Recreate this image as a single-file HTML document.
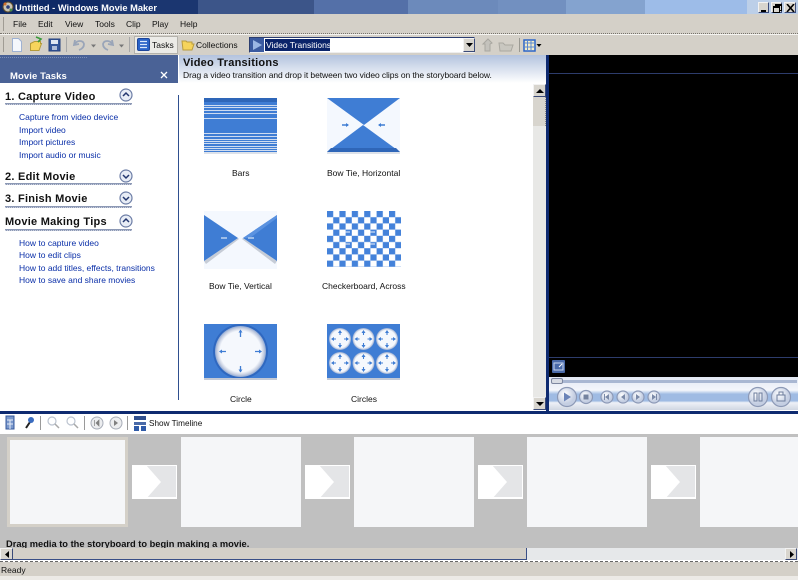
<!DOCTYPE html>
<html><head><meta charset="utf-8"><title>Untitled - Windows Movie Maker</title>
<style>
html,body{margin:0;padding:0;width:798px;height:580px;overflow:hidden;background:#fff}
body{position:relative;font-family:"Liberation Sans",sans-serif;font-size:8.5px;color:#111}
.a{position:absolute}
.t{position:absolute;white-space:nowrap;line-height:12px;height:12px}
.l{color:#0a2fa8}
.h{font-weight:bold;font-size:11px;letter-spacing:.25px;color:#111}
.u{position:absolute;left:5px;width:127px;height:1px;background:#8d99b5;border-bottom:1px dotted #c8cede}
.btn{position:absolute;background:#d8d5ce;border:1px solid;border-color:#f2f2f2 #3a4a78 #3a4a78 #f2f2f2;box-sizing:border-box}
</style></head><body>

<!-- title bar -->
<div class="a" style="left:0;top:0;width:798px;height:14px;background:linear-gradient(90deg,#0f2a66 0 100px,#1b3670 100px 198px,#3c5589 198px 314px,#5470a8 314px 408px,#6c8abb 408px 498px,#7290c0 498px 566px,#84a3cf 566px 645px,#9dbce8 645px 747px,#bccfe8 747px)"></div>
<div class="t" style="left:15px;top:2px;color:#fff;font-weight:bold;font-size:9.3px">Untitled - Windows Movie Maker</div>
<svg class="a" style="left:1px;top:0" width="14" height="14"><circle cx="7" cy="7" r="5" fill="#c8c4b4" stroke="#5b4a2a"/><circle cx="7" cy="7" r="1.8" fill="#2b3f7a"/><circle cx="4" cy="4" r="1.5" fill="#d0702a"/><circle cx="10" cy="10" r="1.5" fill="#4a8a4a"/></svg>
<div class="btn" style="left:758px;top:2px;width:11px;height:11px"><div class="a" style="left:2px;top:7px;width:5px;height:2px;background:#000"></div></div>
<div class="btn" style="left:771px;top:2px;width:11px;height:11px"><div class="a" style="left:3px;top:1px;width:5px;height:4px;border:1px solid #000;border-top-width:2px"></div><div class="a" style="left:1px;top:3px;width:5px;height:4px;border:1px solid #000;border-top-width:2px;background:#d8d5ce"></div></div>
<div class="btn" style="left:784px;top:2px;width:12px;height:11px"><svg class="a" style="left:1px;top:1px" width="9" height="8"><path d="M1 0L8 8M8 0L1 8" stroke="#000" stroke-width="1.6"/></svg></div>

<!-- menu -->
<div class="a" style="left:0;top:14px;width:798px;height:20px;background:#d4d0c8;border-bottom:1px dotted #77736c;box-sizing:border-box"></div>
<div class="a" style="left:3px;top:17px;width:1px;height:14px;background:#a09c94"></div>
<div class="t" style="left:13px;top:18px">File</div>
<div class="t" style="left:38px;top:18px">Edit</div>
<div class="t" style="left:65px;top:18px">View</div>
<div class="t" style="left:95px;top:18px">Tools</div>
<div class="t" style="left:126px;top:18px">Clip</div>
<div class="t" style="left:152px;top:18px">Play</div>
<div class="t" style="left:180px;top:18px">Help</div>

<!-- toolbar -->
<div class="a" style="left:0;top:34px;width:798px;height:21px;background:#d4d0c8;border-top:1px solid #f4f3f0;box-sizing:border-box"></div>
<div class="a" style="left:3px;top:37px;width:1px;height:15px;background:#a09c94"></div>
<svg class="a" style="left:0;top:34px" width="135" height="21">
<path d="M12.5 4.5h6l3 3v10h-9z" fill="#f4f7fc" stroke="#9fb2d2"/>
<path d="M30.5 9.500l4-2h6v2h1l-2.500 7h-8.500z" fill="#f6d45c" stroke="#b49a3a"/><path d="M36 3l5 2-3 3" fill="none" stroke="#3a9a3a" stroke-width="1.600"/>
<rect x="49" y="5" width="11" height="12" fill="#34569a" stroke="#25407c"/><rect x="51" y="6" width="7" height="4" fill="#dfe6f2"/><rect x="52" y="12" width="5" height="4" fill="#aebcd8"/>
<rect x="66" y="3" width="1" height="15" fill="#a8a8a8"/>
<path d="M75 6l-1 5 5-1M75 10c2-4 8-4 9 0 0 3-2 5-5 6" fill="none" stroke="#9aa5b8" stroke-width="1.800"/>
<path d="M91 10.500h5l-2.500 3z" fill="#777"/>
<path d="M112 6l1 5-5-1M112 10c-2-4-8-4-9 0 0 3 2 5 5 6" fill="none" stroke="#9aa5b8" stroke-width="1.800"/>
<path d="M119 10.500h5l-2.500 3z" fill="#777"/>
<rect x="129" y="3" width="1" height="15" fill="#a8a8a8"/>
</svg>
<div class="a" style="left:134px;top:36px;width:44px;height:18px;background:#ecebe7;border:1px solid #b4b2ac;box-sizing:border-box"></div>
<svg class="a" style="left:137px;top:38px" width="14" height="14"><rect x=".5" y=".5" width="12" height="12" rx="1.500" fill="#2b64c8" stroke="#1d459a"/><path d="M3 3.500h7M3 6.500h7M3 9.500h7" stroke="#dbe8fb" stroke-width="1.200"/></svg>
<div class="t" style="left:152px;top:39px">Tasks</div>
<svg class="a" style="left:181px;top:38px" width="14" height="14"><path d="M1 3h4l1 1h5v2h2l-2 6H2z" fill="#f6d45c" stroke="#b99c3e"/></svg>
<div class="t" style="left:196px;top:39px">Collections</div>

<!-- combo -->
<div class="a" style="left:249px;top:37px;width:226px;height:16px;background:#fff;border:1px solid;border-color:#2c3e70 #d8d8d8 #eee #2c3e70;box-sizing:border-box"></div>
<div class="a" style="left:250px;top:38px;width:14px;height:14px;background:#3a5aa0"></div>
<svg class="a" style="left:252px;top:39px" width="11" height="12"><path d="M1 1l9 5-9 5z" fill="#9ab6e4"/></svg>
<div class="a" style="left:265px;top:39px;width:65px;height:12px;background:#0a246a"></div>
<div class="t" style="left:266px;top:39px;color:#fff">Video Transitions</div>
<div class="btn" style="left:463px;top:38px;width:12px;height:14px"><svg class="a" style="left:2px;top:4px" width="7" height="4"><path d="M0 0h7l-3.500 4z" fill="#000"/></svg></div>
<svg class="a" style="left:480px;top:37px" width="64" height="16">
<path d="M3 7l5-5 4 4-2 1v7H5V7z" fill="#c4c2bc" stroke="#a9a7a0"/>
<path d="M19 6h4l2 2h8l-2 6H20z" fill="#c9c7c0" stroke="#aaa8a1"/>
<rect x="39" y="1" width="1" height="14" fill="#9a9992"/>
<rect x="44" y="3" width="11" height="11" fill="#f4ecc8" stroke="#2b64c8" stroke-width="1.500"/><path d="M44 6h11M47.500 3v11M51 3v11M44 10h11" stroke="#5a88d0"/>
<path d="M56.500 7h5l-2.500 3z" fill="#000"/>
</svg>

<!-- left panel -->
<div class="a" style="left:0;top:55px;width:178px;height:28px;background:#4a6296"></div>
<div class="a" style="left:0;top:57px;width:87px;height:1px;border-top:1px dotted #7a8db6"></div>
<div class="t" style="left:10px;top:71px;color:#fff;font-weight:bold;font-size:9.5px;letter-spacing:.1px">Movie Tasks</div>
<svg class="a" style="left:160px;top:71px" width="8" height="8"><path d="M1 1l6 6M7 1L1 7" stroke="#fff" stroke-width="1.300"/></svg>

<div class="t h" style="left:5px;top:91px">1. Capture Video</div><div class="u" style="top:103px"></div>
<div class="t l" style="left:19px;top:111px">Capture from video device</div>
<div class="t l" style="left:19px;top:124px">Import video</div>
<div class="t l" style="left:19px;top:136px">Import pictures</div>
<div class="t l" style="left:19px;top:149px">Import audio or music</div>
<div class="t h" style="left:5px;top:171px">2. Edit Movie</div><div class="u" style="top:183px"></div>
<div class="t h" style="left:5px;top:193px">3. Finish Movie</div><div class="u" style="top:206px"></div>
<div class="t h" style="left:5px;top:216px">Movie Making Tips</div><div class="u" style="top:229px"></div>
<div class="t l" style="left:19px;top:237px">How to capture video</div>
<div class="t l" style="left:19px;top:249px">How to edit clips</div>
<div class="t l" style="left:19px;top:262px">How to add titles, effects, transitions</div>
<div class="t l" style="left:19px;top:274px">How to save and share movies</div>
<svg class="a" style="left:118px;top:88px" width="16" height="146">
<g fill="#e8edf6" stroke="#6d7ea6" stroke-width="1.200"><circle cx="8" cy="7" r="6"/><circle cx="8" cy="88" r="6"/><circle cx="8" cy="110" r="6"/><circle cx="8" cy="133" r="6"/></g>
<g fill="none" stroke="#22366e" stroke-width="1.500"><path d="M5 8l3-3 3 3"/><path d="M5 87l3 3 3-3"/><path d="M5 109l3 3 3-3"/><path d="M5 134l3-3 3 3"/></g>
</svg>
<div class="a" style="left:178px;top:95px;width:1px;height:305px;background:#2f4f8f"></div>

<!-- content header -->
<div class="a" style="left:179px;top:55px;width:367px;height:28px;background:linear-gradient(#b3c3de,#dde4f0 55%,#fff)"></div>
<div class="t" style="left:183px;top:57px;font-weight:bold;font-size:11px;letter-spacing:.25px">Video Transitions</div>
<div class="t" style="left:183px;top:69px;letter-spacing:-.07px">Drag a video transition and drop it between two video clips on the storyboard below.</div>

<!-- thumbs -->
<svg class="a" style="left:179px;top:83px" width="354" height="328">
<defs>
<pattern id="ck" x="148" y="128" width="12.400" height="12.400" patternUnits="userSpaceOnUse"><rect width="6.200" height="6.200" fill="#4482da"/><rect x="6.200" y="6.200" width="6.200" height="6.200" fill="#4482da"/></pattern>
<radialGradient id="cg"><stop offset=".8" stop-color="#f5f8fd"/><stop offset=".92" stop-color="#c4cde0"/><stop offset="1" stop-color="#8ea8d4"/></radialGradient>
<g id="ca">
<path d="M0-8v4M0 4v4M-8 0h4M4 0h4" stroke="#3f7dd4" stroke-width="1.100"/>
<path d="M-2-6l2-3 2 3zM-2 6l2 3 2-3zM-6-2l-3 2 3 2zM6-2l3 2-3 2z" fill="#3f7dd4"/>
</g>
</defs>
<g transform="translate(-179,-83)">
<!-- Bars -->
<rect x="204" y="98" width="73" height="54" fill="#3f7dd4"/>
<rect x="204" y="98" width="73" height="4" fill="#2e66b8"/>
<g fill="#cfdcf0"><rect x="204" y="105" width="73" height="1"/><rect x="204" y="107" width="73" height="1"/><rect x="204" y="110" width="73" height="1"/><rect x="204" y="113" width="73" height="1"/><rect x="204" y="118" width="73" height="1"/><rect x="204" y="133" width="73" height="1"/><rect x="204" y="136" width="73" height="1"/><rect x="204" y="139" width="73" height="1"/><rect x="204" y="141" width="73" height="1"/><rect x="204" y="143" width="73" height="1"/><rect x="204" y="146" width="73" height="1"/><rect x="204" y="148" width="73" height="1"/><rect x="204" y="150" width="73" height="1"/></g>
<rect x="204" y="152" width="73" height="2" fill="#dde2ea"/>
<!-- Bow tie H -->
<rect x="327" y="98" width="73" height="54" fill="#f4f8fe"/>
<path d="M327 98h73l-36 27zM327 152l36-27 37 27z" fill="#3f7dd4"/>
<path d="M327 152l4-4h65l4 4z" fill="#2f66b8"/>
<path d="M342 125h6" stroke="#3f7dd4" stroke-width="1.500"/><path d="M346 123l3 2-3 2z" fill="#3f7dd4"/>
<path d="M379 125h6" stroke="#3f7dd4" stroke-width="1.500"/><path d="M381 123l-3 2 3 2z" fill="#3f7dd4"/>
<rect x="327" y="152" width="73" height="2" fill="#dde2ea"/>
<!-- Bow tie V -->
<rect x="204" y="211" width="73" height="58" fill="#f4f8fe"/>
<path d="M204 261l34-23 1 1-33 25zM277 261l-34-23-1 1 33 25z" fill="#c6ccd6"/>
<path d="M204 215l34 23-34 23zM243 238l34-23v46z" fill="#3f7dd4"/>
<path d="M277 215v3l-27 20h-7z" fill="#5a92e0"/>
<path d="M221 238h6M248 238h6" stroke="#9dbde8" stroke-width="2"/>
<!-- Checker -->
<rect x="327" y="211" width="73" height="56" fill="#fff"/>
<g transform="translate(179,83)"><rect x="148" y="128" width="74" height="56" fill="url(#ck)"/></g>
<g stroke="#f0f4fb" stroke-width="1"><path d="M345 232h5M370 232h5M345 244h5M370 244h5"/></g>
<!-- Circle -->
<rect x="204" y="324" width="73" height="54" fill="#3f7dd4"/>
<circle cx="240.500" cy="351.500" r="27.500" fill="#2f68c0"/>
<circle cx="240.500" cy="351.500" r="25.500" fill="url(#cg)"/>
<path d="M204 378h73v2h-73z" fill="#c4cad6"/>
<path d="M240.500 331v6M240.500 366v6M220 351.500h6M255 351.500h6" stroke="#3f7dd4" stroke-width="1.300"/>
<path d="M238.500 332.500l2-3 2 3zM238.500 369.500l2 3 2-3zM222 349.500l-3 2 3 2zM259 349.500l3 2-3 2z" fill="#3f7dd4"/>
<!-- Circles -->
<rect x="327" y="324" width="73" height="54" fill="#3f7dd4"/>
<path d="M327 378h73v2h-73z" fill="#c4cad6"/>
<circle cx="340" cy="339" r="11" fill="url(#cg)"/><circle cx="363.500" cy="339" r="11" fill="url(#cg)"/><circle cx="387" cy="339" r="11" fill="url(#cg)"/>
<circle cx="340" cy="363" r="11" fill="url(#cg)"/><circle cx="363.500" cy="363" r="11" fill="url(#cg)"/><circle cx="387" cy="363" r="11" fill="url(#cg)"/>
<use href="#ca" x="340" y="339"/><use href="#ca" x="363.500" y="339"/><use href="#ca" x="387" y="339"/>
<use href="#ca" x="340" y="363"/><use href="#ca" x="363.500" y="363"/><use href="#ca" x="387" y="363"/>
</g>
</svg>
<div class="t" style="left:232px;top:167px">Bars</div>
<div class="t" style="left:327px;top:167px">Bow Tie, Horizontal</div>
<div class="t" style="left:209px;top:280px">Bow Tie, Vertical</div>
<div class="t" style="left:322px;top:280px">Checkerboard, Across</div>
<div class="t" style="left:230px;top:393px">Circle</div>
<div class="t" style="left:351px;top:393px">Circles</div>

<!-- content scrollbar -->
<div class="a" style="left:533px;top:84px;width:13px;height:326px;background:#e8e8e6"></div>
<div class="btn" style="left:533px;top:84px;width:13px;height:13px"><svg class="a" style="left:2px;top:4px" width="8" height="4"><path d="M4 0l4 4H0z" fill="#000"/></svg></div>
<div class="a" style="left:533px;top:97px;width:13px;height:29px;background:#d8d5ce;border-right:1px dotted #888;box-sizing:border-box"></div>
<div class="btn" style="left:533px;top:397px;width:13px;height:13px"><svg class="a" style="left:2px;top:4px" width="8" height="4"><path d="M0 0h8l-4 4z" fill="#000"/></svg></div>

<!-- monitor -->
<div class="a" style="left:546px;top:55px;width:3px;height:356px;background:#0e2a70"></div>
<div class="a" style="left:549px;top:55px;width:249px;height:322px;background:#000"></div>
<div class="a" style="left:549px;top:73px;width:249px;height:1px;background:#2d3c6c"></div>
<div class="a" style="left:549px;top:357px;width:249px;height:1px;background:#2d3c6c"></div>
<svg class="a" style="left:552px;top:360px" width="14" height="14"><rect width="13" height="13" rx="1" fill="#4a6aa8"/><rect x="2" y="3" width="9" height="7" fill="none" stroke="#c8d6ee"/><path d="M7 7l3-3" stroke="#fff"/></svg>
<div class="a" style="left:549px;top:377px;width:249px;height:33px;background:linear-gradient(#e2e8f4 0,#f4f6fb 40%,#9fbbe3 52%,#9fbbe3 72%,#eef1f7 78%,#d0d6e2 100%)"></div>
<div class="a" style="left:552px;top:380px;width:245px;height:3px;background:#a9b7d2"></div>
<div class="a" style="left:551px;top:378px;width:12px;height:6px;border-radius:2px;background:#d8dce4;border:1px solid #7d87a0;box-sizing:border-box"></div>
<svg class="a" style="left:549px;top:384px" width="249" height="27">
<defs><radialGradient id="bg" cx=".4" cy=".35"><stop offset="0" stop-color="#fff"/><stop offset="1" stop-color="#c4cee2"/></radialGradient></defs>
<g fill="url(#bg)" stroke="#8c99b6" stroke-width="1.200">
<circle cx="18" cy="13" r="9.500"/><circle cx="37" cy="13" r="6.500"/><circle cx="58" cy="13" r="6"/><circle cx="74" cy="13" r="6"/><circle cx="89" cy="13" r="6"/><circle cx="105" cy="13" r="6"/><circle cx="209" cy="13" r="9.500"/><circle cx="232" cy="13" r="9.500"/>
</g>
<path d="M15 8.500l7 4.500-7 4.500z" fill="#6b84b8"/>
<rect x="34.500" y="10.500" width="5" height="5" fill="#75839f"/>
<path d="M60 10v6l-4-3zM76 10v6l-4-3zM87 10v6l4-3zM103 10v6l4-3z" fill="#7b8aa8"/>
<rect x="55" y="10" width="1" height="6" fill="#7b8aa8"/><rect x="107" y="10" width="1" height="6" fill="#7b8aa8"/>
<path d="M205 9h3v8h-3zM210 9h3v8h-3z" fill="none" stroke="#6c7c9c"/>
<path d="M228 11h8v6h-8zM230 8h4v3h-4z" fill="none" stroke="#6c7c9c"/>
</svg>

<!-- divider -->
<div class="a" style="left:0;top:411px;width:798px;height:3px;background:#0e2a70"></div>

<!-- bottom toolbar -->
<svg class="a" style="left:0;top:414px" width="150" height="20">
<rect x="6" y="2" width="8" height="13" fill="#7a98cc" stroke="#34589c"/><path d="M7 6h6M7 10h6M10 6v9" stroke="#e8eef8"/>
<path d="M26 14l4-6" stroke="#222" stroke-width="2"/><circle cx="31" cy="6" r="3" fill="#3a6cc0"/>
<rect x="40" y="2" width="1" height="14" fill="#9a9a9a"/>
<circle cx="52" cy="7" r="4" fill="none" stroke="#bcc4d0" stroke-width="1.200"/><path d="M55 10l4 4" stroke="#a8a8a8" stroke-width="1.500"/>
<circle cx="71" cy="7" r="4" fill="none" stroke="#bcc4d0" stroke-width="1.200"/><path d="M74 10l4 4" stroke="#a8a8a8" stroke-width="1.500"/>
<rect x="84" y="2" width="1" height="14" fill="#9a9a9a"/>
<circle cx="97" cy="9" r="6" fill="#ecedef" stroke="#a8adb8"/><path d="M99 6v6l-3-3zM94.500 6v6" fill="#808080" stroke="#808080" stroke-width=".7"/>
<circle cx="116" cy="9" r="6" fill="#ecedef" stroke="#a8adb8"/><path d="M114 6l4 3-4 3z" fill="#808080"/>
<rect x="127" y="2" width="1" height="14" fill="#9a9a9a"/>
<rect x="134" y="2" width="12" height="4" fill="#2f4f8f"/><rect x="134" y="8" width="12" height="3" fill="#4a6aa8"/><rect x="134" y="12" width="5" height="5" fill="#2f5aa8"/><rect x="141" y="12" width="5" height="5" fill="#2f5aa8"/>
</svg>
<div class="t" style="left:149px;top:418px;font-size:8.2px">Show Timeline</div>

<!-- storyboard -->
<div class="a" style="left:0;top:434px;width:798px;height:114px;background:#c0c0c0"></div>
<div class="a" style="left:7px;top:437px;width:121px;height:90px;background:#f5f6f8;border:3px solid #d4d0c8;box-sizing:border-box"></div>
<div class="a" style="left:181px;top:437px;width:120px;height:90px;background:#f5f6f8"></div>
<div class="a" style="left:354px;top:437px;width:120px;height:90px;background:#f5f6f8"></div>
<div class="a" style="left:527px;top:437px;width:120px;height:90px;background:#f5f6f8"></div>
<div class="a" style="left:700px;top:437px;width:98px;height:90px;background:#f5f6f8"></div>
<svg class="a" style="left:0;top:465px" width="798" height="34">
<defs><g id="tr"><rect width="45" height="34" fill="#fff"/><rect x="14" y="1" width="30" height="31" fill="#e4e5e7"/><path d="M14 0l15 17-15 17H0V0z" fill="#fff"/></g></defs>
<use href="#tr" x="132"/><use href="#tr" x="305"/><use href="#tr" x="478"/><use href="#tr" x="651"/>
</svg>
<div class="t" style="left:6px;top:538px;font-weight:bold;font-size:9.300px">Drag media to the storyboard to begin making a movie.</div>

<!-- h scrollbar -->
<div class="a" style="left:0;top:548px;width:798px;height:12px;background:#e6e8ea"></div>
<div class="a" style="left:12px;top:548px;width:515px;height:12px;background:#d4d0c8;border-right:1px solid #3a4f86;border-bottom:1px solid #3a4f86;box-sizing:border-box"></div>
<div class="btn" style="left:0;top:548px;width:13px;height:12px"><svg class="a" style="left:4px;top:2px" width="4" height="7"><path d="M4 0v7L0 3.500z" fill="#000"/></svg></div>
<div class="btn" style="left:785px;top:548px;width:12px;height:12px"><svg class="a" style="left:4px;top:2px" width="4" height="7"><path d="M0 0v7l4-3.500z" fill="#000"/></svg></div>

<!-- status -->
<div class="a" style="left:0;top:560px;width:798px;height:2px;background:#fff;border-bottom:1px dashed #666;box-sizing:border-box"></div>
<div class="a" style="left:0;top:562px;width:798px;height:14px;background:#d4d0c8"></div>
<div class="a" style="left:0;top:576px;width:798px;height:4px;background:#eceae6"></div>
<div class="t" style="left:1px;top:564px">Ready</div>
</body></html>
